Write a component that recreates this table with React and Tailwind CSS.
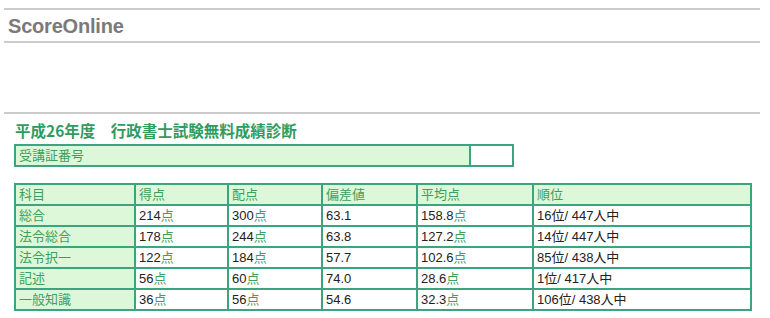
const rows = [
  { name: "総合", score: "214", full: "300", dev: "63.1", avg: "158.8", rank: "16位/ 447人中" },
  { name: "法令総合", score: "178", full: "244", dev: "63.8", avg: "127.2", rank: "14位/ 447人中" },
  { name: "法令択一", score: "122", full: "184", dev: "57.7", avg: "102.6", rank: "85位/ 438人中" },
  { name: "記述", score: "56", full: "60", dev: "74.0", avg: "28.6", rank: "1位/ 417人中" },
  { name: "一般知識", score: "36", full: "56", dev: "54.6", avg: "32.3", rank: "106位/ 438人中" },
];

const th = "border-2 border-[#3aa57e] bg-[#ddf8d8] text-[#3e9e5e] font-normal text-left px-[3px] h-[21px] leading-none";
const td = "border-2 border-[#3aa57e] bg-white text-[#222] px-[3px] h-[21px] leading-none";

function Pt() {
  return <span className="text-[#3e9e5e]">点</span>;
}

export default function App() {
  return (
    <div className="w-[770px] h-[318px] bg-white overflow-hidden font-['Liberation_Sans','Noto_Sans_CJK_JP',sans-serif]">
      {/* Header */}
      <div className="pt-[8px] px-[4px] w-[764px]">
        <div className="border-t-2 border-[#cccccc]" />
        <div className="h-[31px] flex items-center pl-[4px] text-[20px] font-bold text-[#7a7a7a] tracking-[-0.2px]">
          ScoreOnline
        </div>
        <div className="border-t-2 border-[#cccccc]" />
        <div className="h-[69px]" />
        <div className="border-t-2 border-[#cccccc]" />
      </div>

      <div className="pl-[14px] pt-[9px]">
        <h1 className="text-[15.5px] font-bold text-[#2f9c5f] leading-none pl-[1px] h-[20px] font-['Noto_Sans_CJK_JP',sans-serif]">
          平成26年度　行政書士試験無料成績診断
        </h1>

        {/* 受講証番号 */}
        <table className="border-collapse text-[13px] w-[500px] mt-[1px]">
          <tbody>
            <tr>
              <td className={th + " w-[455px]"}>受講証番号</td>
              <td className={td}></td>
            </tr>
          </tbody>
        </table>

        {/* Results */}
        <table className="border-collapse text-[13px] w-[738px] mt-[16px]">
          <thead>
            <tr>
              <th className={th + " w-[120px]"}>科目</th>
              <th className={th + " w-[93px]"}>得点</th>
              <th className={th + " w-[94px]"}>配点</th>
              <th className={th + " w-[95px]"}>偏差値</th>
              <th className={th + " w-[116px]"}>平均点</th>
              <th className={th}>順位</th>
            </tr>
          </thead>
          <tbody>
            {rows.map((r) => (
              <tr key={r.name}>
                <td className={th}>{r.name}</td>
                <td className={td}>{r.score}<Pt /></td>
                <td className={td}>{r.full}<Pt /></td>
                <td className={td}>{r.dev}</td>
                <td className={td}>{r.avg}<Pt /></td>
                <td className={td}>{r.rank}</td>
              </tr>
            ))}
          </tbody>
        </table>
      </div>
    </div>
  );
}
